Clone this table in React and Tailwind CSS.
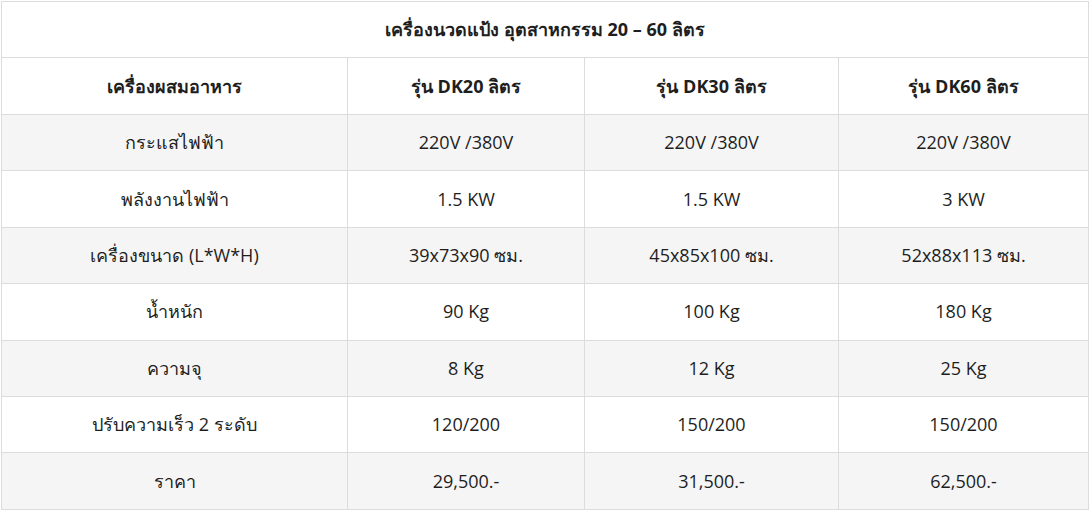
const rows = [
    ['กระแสไฟฟ้า', '220V /380V', '220V /380V', '220V /380V'],
    ['พลังงานไฟฟ้า', '1.5 KW', '1.5 KW', '3 KW'],
    ['เครื่องขนาด (L*W*H)', '39x73x90 ซม.', '45x85x100 ซม.', '52x88x113 ซม.'],
    ['น้ำหนัก', '90 Kg', '100 Kg', '180 Kg'],
    ['ความจุ', '8 Kg', '12 Kg', '25 Kg'],
    ['ปรับความเร็ว 2 ระดับ', '120/200', '150/200', '150/200'],
    ['ราคา', '29,500.-', '31,500.-', '62,500.-'],
];

export default function App() {
    return (
        <div className="bg-white pt-px pl-px" style={{ fontFamily: '"Open Sans", "Noto Sans", sans-serif' }}>
            <table className="w-[1088px] table-fixed border-collapse border border-[#dcdcdc] text-[18px] text-[#1e1e1e]">
                <colgroup>
                    <col className="w-[346px]" />
                    <col className="w-[237px]" />
                    <col className="w-[254px]" />
                    <col />
                </colgroup>
                <tbody>
                    <tr className="h-[56px] bg-white">
                        <td colSpan={4} className="border border-[#dcdcdc] text-center font-bold">
                            เครื่องนวดแป้ง อุตสาหกรรม 20 – 60 ลิตร
                        </td>
                    </tr>
                    <tr className="h-[57px] bg-white">
                        <td className="border border-[#dcdcdc] text-center font-bold">เครื่องผสมอาหาร</td>
                        <td className="border border-[#dcdcdc] text-center font-bold">รุ่น DK20 ลิตร</td>
                        <td className="border border-[#dcdcdc] text-center font-bold">รุ่น DK30 ลิตร</td>
                        <td className="border border-[#dcdcdc] text-center font-bold">รุ่น DK60 ลิตร</td>
                    </tr>
                    {rows.map((r, i) => (
                        <tr key={i} className={`h-[56.4px] ${i % 2 === 0 ? 'bg-[#f5f5f5]' : 'bg-white'}`}>
                            {r.map((c, j) => (
                                <td key={j} className="border border-[#dcdcdc] text-center">{c}</td>
                            ))}
                        </tr>
                    ))}
                </tbody>
            </table>
        </div>
    );
}
